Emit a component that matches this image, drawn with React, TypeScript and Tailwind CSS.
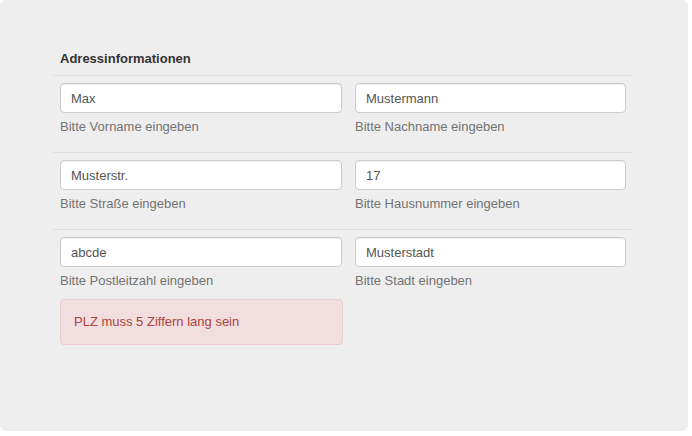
type Field = {
  value: string;
  help: string;
};

type Row = {
  left: Field;
  right: Field;
  error?: string;
};

const rows: Row[] = [
  {
    left: { value: "Max", help: "Bitte Vorname eingeben" },
    right: { value: "Mustermann", help: "Bitte Nachname eingeben" },
  },
  {
    left: { value: "Musterstr.", help: "Bitte Straße eingeben" },
    right: { value: "17", help: "Bitte Hausnummer eingeben" },
  },
  {
    left: { value: "abcde", help: "Bitte Postleitzahl eingeben" },
    right: { value: "Musterstadt", help: "Bitte Stadt eingeben" },
    error: "PLZ muss 5 Ziffern lang sein",
  },
];

function FormField({ field, width }: { field: Field; width: string }) {
  return (
    <div className={width}>
      <input
        className="block h-[30px] w-full rounded-[4px] border border-[#cccccc] bg-white px-[10px] text-[13px] text-[#555555] shadow-[inset_0_1px_1px_rgba(0,0,0,0.075)] outline-none"
        defaultValue={field.value}
        type="text"
      />
      <p className="mt-[5px] text-[13px] leading-[18px] text-[#737373]">
        {field.help}
      </p>
    </div>
  );
}

export default function App() {
  return (
    <div className="h-[436px] w-[692px] bg-white font-['Liberation_Sans',Arial,sans-serif]">
      <div className="h-[431px] w-[688px] rounded-[6px] bg-[#eeeeee] pl-[53px] pt-[50px]">
        <div className="w-[580px]">
          <h3 className="mb-[7px] px-[7px] text-[13px] font-bold leading-[18px] text-[#333333]">
            Adressinformationen
          </h3>
          {rows.map((row, index) => (
            <div
              className="border-t border-[#dddddd] px-[7px] pb-[16px] pt-[7px]"
              key={index}
            >
              <div className="flex gap-[13px]">
                <FormField field={row.left} width="w-[283px]" />
                <FormField field={row.right} width="w-[272px]" />
              </div>
              {row.error && (
                <div className="mt-[9px] flex h-[46px] w-[283px] items-center rounded-[4px] border border-[#ebccd1] bg-[#f2dede] px-[13px] text-[13px] text-[#a94442]">
                  {row.error}
                </div>
              )}
            </div>
          ))}
        </div>
      </div>
    </div>
  );
}
